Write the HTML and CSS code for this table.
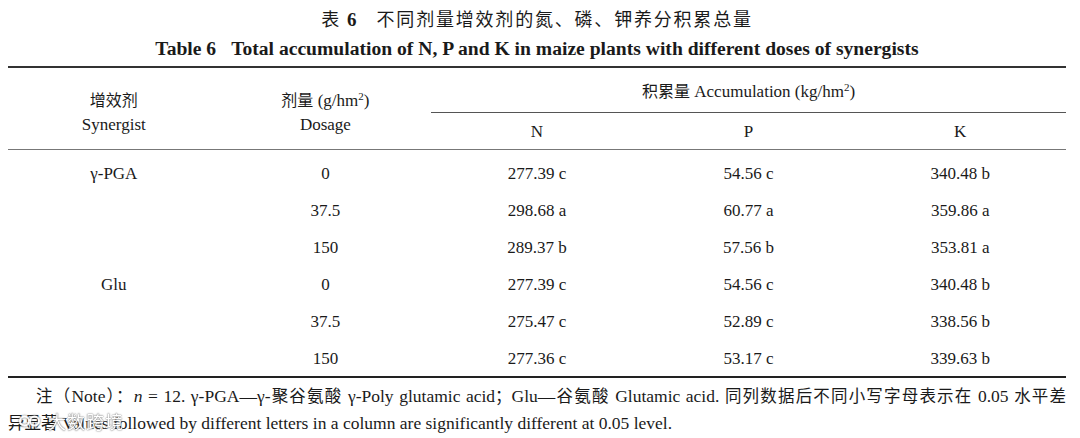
FILE: index.html
```html
<!DOCTYPE html>
<html lang="zh">
<head>
<meta charset="utf-8">
<title>表 6</title>
<link rel="stylesheet" href="styles.css">
</head>
<body>
<div class="page">
  <h1 class="title-cn">表<b class="num">6</b>不同剂量增效剂的氮、磷、钾养分积累总量</h1>
  <h2 class="title-en">Table 6<span class="gap"></span>Total accumulation of N, P and K in maize plants with different doses of synergists</h2>
  <table class="data">
    <colgroup>
      <col class="c1"><col class="c2"><col class="c3"><col class="c4"><col class="c5">
    </colgroup>
    <thead>
      <tr class="h1">
        <th rowspan="2" class="stack"><span class="cn">增效剂</span><br>Synergist</th>
        <th rowspan="2" class="stack"><span class="cn">剂量</span> (g/hm<sup>2</sup>)<br>Dosage</th>
        <th colspan="3" class="group"><span class="cn">积累量</span> Accumulation (kg/hm<sup>2</sup>)</th>
      </tr>
      <tr class="h2">
        <th>N</th><th>P</th><th>K</th>
      </tr>
    </thead>
    <tbody>
      <tr><td>γ-PGA</td><td>0</td><td>277.39 c</td><td>54.56 c</td><td>340.48 b</td></tr>
      <tr><td></td><td>37.5</td><td>298.68 a</td><td>60.77 a</td><td>359.86 a</td></tr>
      <tr><td></td><td>150</td><td>289.37 b</td><td>57.56 b</td><td>353.81 a</td></tr>
      <tr><td>Glu</td><td>0</td><td>277.39 c</td><td>54.56 c</td><td>340.48 b</td></tr>
      <tr><td></td><td>37.5</td><td>275.47 c</td><td>52.89 c</td><td>338.56 b</td></tr>
      <tr class="last"><td></td><td>150</td><td>277.36 c</td><td>53.17 c</td><td>339.63 b</td></tr>
    </tbody>
  </table>
  <div class="note">
    <p class="line first"><span class="cn">注（</span>Note<span class="cn">）：</span><i>n</i> = 12. γ-PGA—γ-<span class="cn">聚谷氨酸</span> γ-Poly glutamic acid<span class="cn">；</span>Glu—<span class="cn">谷氨酸</span> Glutamic acid. <span class="cn">同列数据后不同小写字母表示在</span> 0.05 <span class="cn">水平差</span></p>
    <p class="line"><span class="cn">异显著</span> Values followed by different letters in a column are significantly different at 0.05 level.</p>
  </div>
  <div class="watermark">
    <svg class="wm-logo" width="24" height="14" viewBox="0 0 24 14" aria-hidden="true">
      <circle cx="6.5" cy="7" r="4.5" fill="none" stroke="#fff" stroke-width="2"/>
      <circle cx="16.5" cy="7" r="4.5" fill="none" stroke="#fff" stroke-width="2"/>
    </svg>
    <span class="wm-text">大数跨境</span>
  </div>
</div>
</body>
</html>
```

FILE: styles.css
```css
html, body {
  margin: 0;
  padding: 0;
  background: #ffffff;
}

body {
  font-family: "Liberation Serif", "Noto Sans CJK SC", serif;
  color: #1a1a1a;
}

.page {
  position: relative;
  width: 1058px;
  padding: 0 14px 0 8px;
}

.cn {
  font-family: "Noto Sans CJK SC", sans-serif;
  font-weight: 400;
}

.title-cn {
  margin: 0;
  padding-top: 5px;
  height: 29px;
  line-height: 26px;
  font-family: "Noto Sans CJK SC", sans-serif;
  font-weight: 400;
  font-size: 18px;
  letter-spacing: 1.8px;
  text-align: center;
}

.title-cn .num {
  font-family: "Liberation Serif", serif;
  font-weight: 700;
  font-size: 19px;
  margin: 0 20px 0 6px;
  letter-spacing: 0;
}

.title-en {
  margin: 0;
  height: 32px;
  line-height: 30px;
  font-family: "Liberation Serif", serif;
  font-weight: 700;
  font-size: 19.6px;
  text-align: center;
}

.title-en .gap {
  display: inline-block;
  width: 15px;
}

.data {
  width: 1058px;
  border-collapse: collapse;
  table-layout: fixed;
  font-size: 17px;
  border-top: 2px solid #333;
  border-bottom: 2px solid #222;
}

.data col { width: 211.6px; }

.data th {
  font-weight: 400;
  text-align: center;
  line-height: 22px;
}

.data th.stack {
  vertical-align: top;
  padding: 19px 0 0;
  line-height: 24px;
}

.data th.stack .cn { font-size: 16px; }

.data th.group {
  padding: 11px 0 9px;
  border-bottom: 1px solid #555;
}

.data th.group .cn { font-size: 16px; }

.data tr.h2 th {
  padding: 8px 0 6px;
}

.data thead {
  border-bottom: 1px solid #777;
}

.data sup {
  font-size: 11px;
  line-height: 0;
  vertical-align: 6px;
}

.data td {
  text-align: center;
  line-height: 22px;
  padding: 13px 0 2px;
}

.data tr.last td {
  padding-bottom: 6px;
}

.note {
  margin-top: 4px;
  font-size: 17.5px;
  line-height: 26px;
}

.note .line {
  margin: 0;
}

.note .line.first {
  text-indent: 28px;
  text-align: justify;
  text-align-last: justify;
}

.note .cn { font-size: 16.5px; }

.watermark {
  position: absolute;
  left: 18px;
  top: 408px;
  display: flex;
  align-items: center;
  gap: 6px;
  opacity: 0.92;
}

.wm-logo {
  filter: drop-shadow(0 0 1px #666);
}

.wm-text {
  font-family: "Noto Sans CJK SC", sans-serif;
  font-size: 18px;
  color: #ffffff;
  text-shadow: 0 0 1px #555, 0 0 2px #888;
  letter-spacing: 1px;
}
```
